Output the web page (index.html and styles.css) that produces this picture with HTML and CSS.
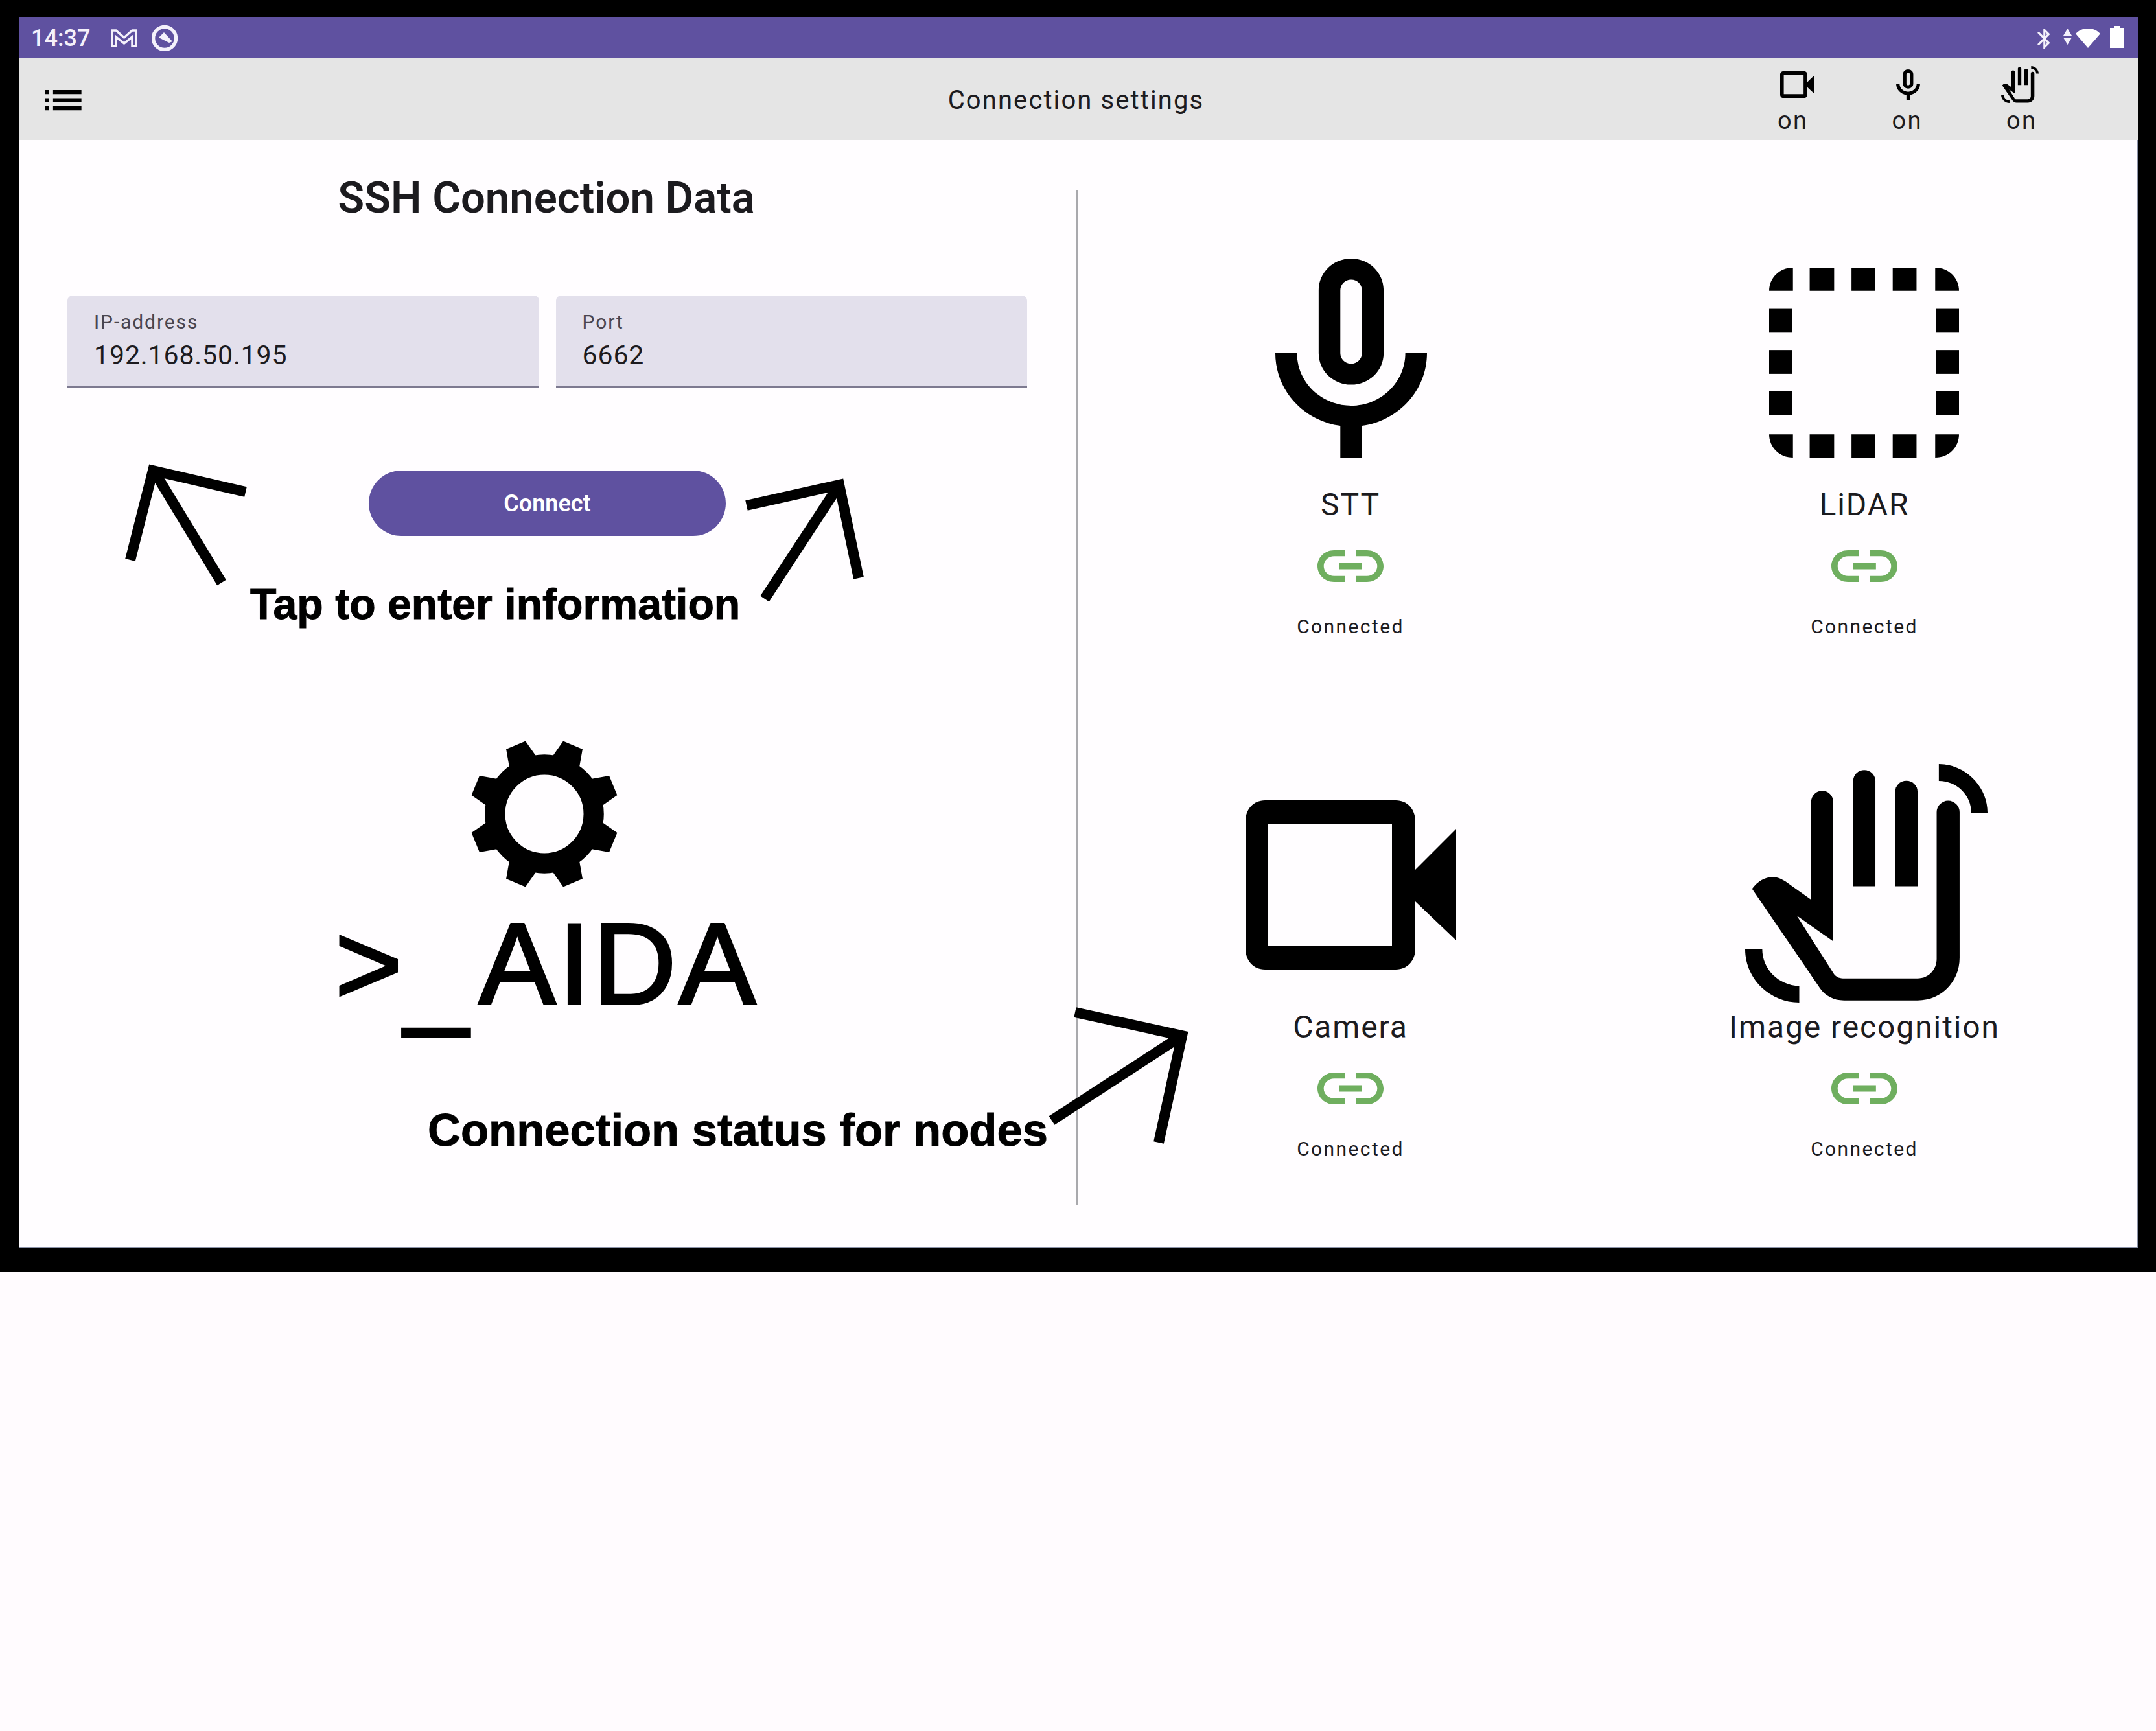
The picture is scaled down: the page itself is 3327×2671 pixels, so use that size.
FILE: index.html
```html
<!DOCTYPE html>
<html lang="en">
<head>
<meta charset="utf-8">
<title>Connection settings</title>
<link rel="stylesheet" href="styles.css">
</head>
<body>
<svg class="defs" aria-hidden="true">
  <symbol id="i-mic" viewBox="5 2 14 19" preserveAspectRatio="none">
    <path d="M12 14c1.66 0 3-1.34 3-3V5c0-1.66-1.34-3-3-3S9 3.34 9 5v6c0 1.66 1.34 3 3 3zm-1-9c0-.55.45-1 1-1s1 .45 1 1v6c0 .55-.45 1-1 1s-1-.45-1-1V5zm6 6c0 2.76-2.24 5-5 5s-5-2.24-5-5H5c0 3.53 2.61 6.43 6 6.92V21h2v-3.08c3.39-.49 6-3.39 6-6.92h-2z"/>
  </symbol>
  <symbol id="i-cam" viewBox="0 0 325 261" preserveAspectRatio="none">
    <path fill-rule="evenodd" d="M30 0H232C250 0 262 14 262 32V107L325 44V216L262 156V229C262 247 250 261 232 261H30C12 261 0 247 0 229V32C0 14 12 0 30 0ZM35 37V225H226V37Z"/>
  </symbol>
  <symbol id="i-hand" viewBox="133 87 1120 1105" preserveAspectRatio="none">
    <path d="M165 665C190 630 225 610 260 610C280 610 300 618 318 630L438 715V262A51 51 0 0 1 540 262V908L372 790L540 1055C550 1072 565 1080 585 1080H930C980 1080 1018 1040 1018 990V310A53 53 0 0 1 1124 310V985C1124 1095 1040 1182 930 1182H590C540 1182 500 1160 475 1120Z"/>
    <path d="M632 166A51.500 51.500 0 0 1 735 166V653H632Z"/>
    <path d="M826 216A52 52 0 0 1 930 216V653H826Z"/>
    <path d="M1028 87V165C1110 165 1178 230 1178 312H1253C1253 190 1150 87 1028 87Z"/>
    <path d="M133 945H212C212 1035 285 1112 383 1115V1192C245 1192 133 1080 133 945Z"/>
  </symbol>
  <symbol id="i-link" viewBox="2 7 20 10" preserveAspectRatio="none">
    <path d="M3.900 12c0-1.710 1.390-3.100 3.100-3.100h3.400V7H7c-2.760 0-5 2.240-5 5s2.240 5 5 5h3.400v-1.900H7c-1.710 0-3.100-1.390-3.100-3.100zM8.500 13h7v-2h-7v2zm8.500-6h-3.400v1.900H17c1.710 0 3.100 1.390 3.100 3.100s-1.390 3.100-3.100 3.100h-3.400V17H17c2.760 0 5-2.240 5-5s-2.240-5-5-5z"/>
  </symbol>
</svg>

<div class="frame">
  <div class="screen">
    <div class="status">
      <div class="status-group">
        <span class="time">14:37</span>
        <svg class="st-gmail" viewBox="0 0 41 28"><path d="M2 26V2h6l12.500 11L33 2h6v24h-6V12L20.500 22 8 12v14z"/></svg>
        <svg class="st-circle" viewBox="0 0 40 40"><circle cx="20" cy="20" r="17.500"/><path class="st-fill" d="M11 19l8-8 13 14-5 2z"/></svg>
      </div>
      <div class="status-group">
        <svg class="st-bt" viewBox="5 2 13 20" preserveAspectRatio="none"><path d="M17.710 7.710L12 2h-1v7.590L6.410 5 5 6.410 10.590 12 5 17.590 6.410 19 11 14.410V22h1l5.710-5.710-4.300-4.290 4.300-4.290zM13 5.830l1.880 1.880L13 9.590V5.830zm1.880 10.460L13 18.170v-3.760l1.880 1.880z"/></svg>
        <svg class="st-data" viewBox="0 0 13 25"><path d="M6.500 0L13 11H0zM0 14h13L6.500 25z"/></svg>
        <svg class="st-wifi" viewBox="0 0 38 30"><path d="M0 8C10-3 28-3 38 8L19 30Z"/></svg>
        <svg class="st-bat" viewBox="0 0 21 34"><path d="M6 0h9v3h6v31H0V3h6z"/></svg>
      </div>
    </div>

    <header class="appbar">
      <svg class="menu" viewBox="0 0 24 24"><path d="M3 13h2v-2H3v2zm0 4h2v-2H3v2zm0-8h2V7H3v2zm4 4h14v-2H7v2zm0 4h14v-2H7v2zM7 7v2h14V7H7z"/></svg>
      <h1 class="bar-title">Connection settings</h1>
      <div class="toggles">
        <div class="toggle">
          <div class="toggle-icon"><svg class="t-cam"><use href="#i-cam"/></svg></div>
          <span class="toggle-text">on</span>
        </div>
        <div class="toggle">
          <div class="toggle-icon"><svg class="t-mic"><use href="#i-mic"/></svg></div>
          <span class="toggle-text">on</span>
        </div>
        <div class="toggle">
          <div class="toggle-icon"><svg class="t-hand"><use href="#i-hand"/></svg></div>
          <span class="toggle-text">on</span>
        </div>
      </div>
    </header>

    <main class="content">
      <section class="left">
        <h2 class="ssh-title">SSH Connection Data</h2>
        <div class="fields">
          <div class="field">
            <div class="field-label">IP-address</div>
            <div class="field-value">192.168.50.195</div>
          </div>
          <div class="field">
            <div class="field-label">Port</div>
            <div class="field-value">6662</div>
          </div>
        </div>
        <button class="connect">Connect</button>
        <div class="logo">
          <svg class="gear" viewBox="-114 -114 228 228">
            <circle class="gear-ring" r="75.500"/>
            <polygon points="-24,-78 -16,-114 16,-114 24,-78" transform="rotate(22.500)"/>
            <polygon points="-24,-78 -16,-114 16,-114 24,-78" transform="rotate(67.500)"/>
            <polygon points="-24,-78 -16,-114 16,-114 24,-78" transform="rotate(112.500)"/>
            <polygon points="-24,-78 -16,-114 16,-114 24,-78" transform="rotate(157.500)"/>
            <polygon points="-24,-78 -16,-114 16,-114 24,-78" transform="rotate(202.500)"/>
            <polygon points="-24,-78 -16,-114 16,-114 24,-78" transform="rotate(247.500)"/>
            <polygon points="-24,-78 -16,-114 16,-114 24,-78" transform="rotate(292.500)"/>
            <polygon points="-24,-78 -16,-114 16,-114 24,-78" transform="rotate(337.500)"/>
          </svg>
          <div class="logo-text"><span class="logo-prompt">&gt;</span><span class="logo-under">_</span>AIDA</div>
        </div>
      </section>

      <div class="divider"></div>

      <section class="nodes">
        <div class="node">
          <div class="node-icon"><svg class="n-mic"><use href="#i-mic"/></svg></div>
          <div class="node-name">STT</div>
          <svg class="link"><use href="#i-link"/></svg>
          <div class="node-state">Connected</div>
        </div>
        <div class="node">
          <div class="node-icon">
            <svg class="n-lidar" viewBox="0 0 295 295">
              <path d="M37 0V36H0C0 16 16 0 37 0Z"/><rect x="63" width="38" height="36"/><rect x="128" width="37" height="36"/><rect x="192" width="37" height="36"/><path d="M258 0V36H295C295 16 279 0 258 0Z"/>
              <rect y="64" width="36" height="37"/><rect y="128" width="36" height="37"/><rect y="192" width="36" height="37"/>
              <rect x="259" y="64" width="36" height="37"/><rect x="259" y="128" width="36" height="37"/><rect x="259" y="192" width="36" height="37"/>
              <path d="M37 295V259H0C0 279 16 295 37 295Z"/><rect x="63" y="259" width="38" height="36"/><rect x="128" y="259" width="37" height="36"/><rect x="192" y="259" width="37" height="36"/><path d="M258 295V259H295C295 279 279 295 258 295Z"/>
            </svg>
          </div>
          <div class="node-name">LiDAR</div>
          <svg class="link"><use href="#i-link"/></svg>
          <div class="node-state">Connected</div>
        </div>
        <div class="node">
          <div class="node-icon"><svg class="n-cam"><use href="#i-cam"/></svg></div>
          <div class="node-name">Camera</div>
          <svg class="link"><use href="#i-link"/></svg>
          <div class="node-state">Connected</div>
        </div>
        <div class="node">
          <div class="node-icon"><svg class="n-hand"><use href="#i-hand"/></svg></div>
          <div class="node-name">Image recognition</div>
          <svg class="link"><use href="#i-link"/></svg>
          <div class="node-state">Connected</div>
        </div>
      </section>
    </main>
  </div>

  <svg class="arrows" viewBox="0 0 3327 1963">
    <polyline points="379,759 236,726 201,864"/>
    <line x1="237" y1="726" x2="342" y2="899"/>
    <polyline points="1152,780 1295,748 1325,892"/>
    <line x1="1295" y1="748" x2="1180" y2="924"/>
    <polyline points="1659,1562 1824,1598 1788,1763"/>
    <line x1="1824" y1="1598" x2="1623" y2="1729"/>
  </svg>
  <div class="note note-tap">Tap to enter information</div>
  <div class="note note-status">Connection status for nodes</div>
</div>
</body>
</html>
```

FILE: styles.css
```css
* { box-sizing: border-box; }
html, body { margin: 0; padding: 0; }
body {
  min-height: 2671px;
  background: #fffbfe;
  font-family: Roboto, "Liberation Sans", sans-serif;
  color: #1c1b1f;
}
.defs { position: absolute; width: 0; height: 0; }
svg { display: block; flex: none; }

.frame {
  position: relative;
  width: 3327px;
  height: 1963px;
  padding: 27px 28px 38px 29px;
  background: #000;
}
.screen {
  display: flex;
  flex-direction: column;
  height: 1898px;
  background: #fffdff;
}

/* status bar */
.status {
  display: flex;
  justify-content: space-between;
  align-items: center;
  height: 62px;
  padding: 2px 22px 0 19px;
  background: #5f51a0;
}
.status-group { display: flex; align-items: center; }
.time { width: 91px; font-size: 36px; font-weight: 500; line-height: 60px; color: #f4f1fb; }
.st-gmail { width: 41px; height: 28px; margin-left: 32px; fill: none; stroke: #f4f1fb; stroke-width: 3.500; }
.st-circle { width: 40px; height: 40px; margin-left: 22px; fill: none; stroke: #f4f1fb; stroke-width: 5.500; }
.st-fill { fill: #f4f1fb; stroke: none; }
.st-bt { width: 20px; height: 31px; fill: #f4f1fb; }
.st-data { width: 13px; height: 25px; margin-left: 20px; margin-top: -6px; fill: #f4f1fb; }
.st-wifi { width: 38px; height: 30px; margin-left: 6px; fill: #fff; }
.st-bat { width: 21px; height: 34px; margin-left: 15px; margin-top: -4px; fill: #fff; }

/* app bar */
.appbar {
  display: grid;
  grid-template-columns: 1fr auto 1fr;
  align-items: start;
  height: 127px;
  padding: 0 38px 0 31px;
  background: #e5e5e5;
}
.menu { width: 75px; height: 75px; margin-top: 28px; fill: #000; }
.bar-title {
  margin: 0;
  padding-top: 2px;
  font-size: 40px;
  font-weight: 400;
  line-height: 127px;
  letter-spacing: 2.100px;
  color: #1c1b1f;
}
.toggles { display: flex; justify-content: flex-end; margin-right: 53px; padding-top: 11px; }
.toggle { display: flex; flex-direction: column; align-items: center; width: 176.500px; }
.toggle-icon { display: flex; justify-content: center; align-items: center; height: 60px; }
.toggle-text { margin-top: 6px; font-size: 38px; line-height: 40px; letter-spacing: 2.500px; }
.t-cam { width: 52px; height: 41px; margin-left: 12px; }
.t-mic { width: 37px; height: 47px; margin-left: 2px; }
.t-hand { width: 58px; height: 57px; margin-right: 6px; }

/* main area */
.content {
  flex: 1;
  display: flex;
  border-right: 2px solid #8b92a8;
  border-bottom: 1px solid #8b92a8;
}
.left {
  display: flex;
  flex-direction: column;
  align-items: center;
  width: 1632px;
  padding: 52px 76px 0 75px;
}
.ssh-title {
  margin: 0 0 0 -3px;
  font-size: 67px;
  font-weight: 600;
  line-height: 74px;
  color: #1c1b1f;
}
.fields {
  display: grid;
  grid-template-columns: 1fr 1fr;
  gap: 26px;
  align-self: stretch;
  margin-top: 114px;
}
.field {
  height: 142px;
  padding: 20px 0 0 41px;
  background: #e3e0ec;
  border-bottom: 3px solid #7d7a90;
  border-radius: 8px 8px 0 0;
}
.field-label { font-size: 30px; line-height: 42px; letter-spacing: 1.900px; color: #49454f; }
.field-value { margin-top: 2px; font-size: 41px; line-height: 56px; letter-spacing: .900px; }
.connect {
  width: 551px;
  height: 101px;
  margin-top: 128px;
  border: 0;
  border-radius: 51px;
  background: #5f51a0;
  color: #fff;
  font-family: inherit;
  font-size: 36px;
  font-weight: 600;
}
.logo { display: flex; flex-direction: column; align-items: center; margin-top: 314px; margin-left: -2px; }
.gear { width: 230px; height: 230px; margin-left: -7px; }
.gear-ring { fill: none; stroke: #000; stroke-width: 31; }
.logo-text {
  margin-top: 27px;
  font-family: "Liberation Sans", Arial, sans-serif;
  font-size: 178px;
  line-height: 180px;
  letter-spacing: 4px;
  -webkit-text-stroke: 4px #000;
  color: #000;
  white-space: nowrap;
}
.logo-prompt { letter-spacing: 5px; margin-right: -2px; }
.logo-under { position: relative; top: 15px; letter-spacing: 16px; }
.divider { width: 3px; margin: 77px 0 65px; background: #a9a9ad; flex: none; }
.nodes {
  flex: 1;
  display: grid;
  grid-template-columns: 793px 793px;
  grid-auto-rows: 806px;
  justify-content: center;
  padding-top: 77px;
}
.node { display: flex; flex-direction: column; align-items: center; }
.node-icon { display: flex; justify-content: center; align-items: center; height: 368px; margin-top: 80px; }
.n-mic { width: 234px; height: 308px; margin: 0 0 8px 2px; }
.n-lidar { width: 295px; height: 293px; margin: 5px 0 0 -1px; }
.n-cam { width: 325px; height: 261px; margin: 5px 0 0 1px; }
.n-hand { width: 374px; height: 368px; margin-left: 6px; }
.node-name { margin-top: 13px; font-size: 48px; line-height: 50px; letter-spacing: 1.900px; white-space: nowrap; }
.link { width: 102px; height: 49px; margin-top: 45px; fill: #6fae5f; }
.node-state { margin-top: 49px; font-size: 30px; line-height: 40px; letter-spacing: 2.400px; }

/* annotations drawn on top of the screenshot */
.arrows { position: absolute; left: 0; top: 0; width: 3327px; height: 1963px; fill: none; stroke: #000; stroke-width: 16; stroke-miterlimit: 10; pointer-events: none; }
.note { position: absolute; font-family: "Liberation Sans", Arial, sans-serif; font-weight: 700; color: #000; white-space: nowrap; -webkit-text-stroke: 1px #000; }
.note-tap { left: 386px; top: 895px; font-size: 66.200px; line-height: 74px; }
.note-status { left: 660px; top: 1704px; font-size: 70.600px; line-height: 80px; }
```
